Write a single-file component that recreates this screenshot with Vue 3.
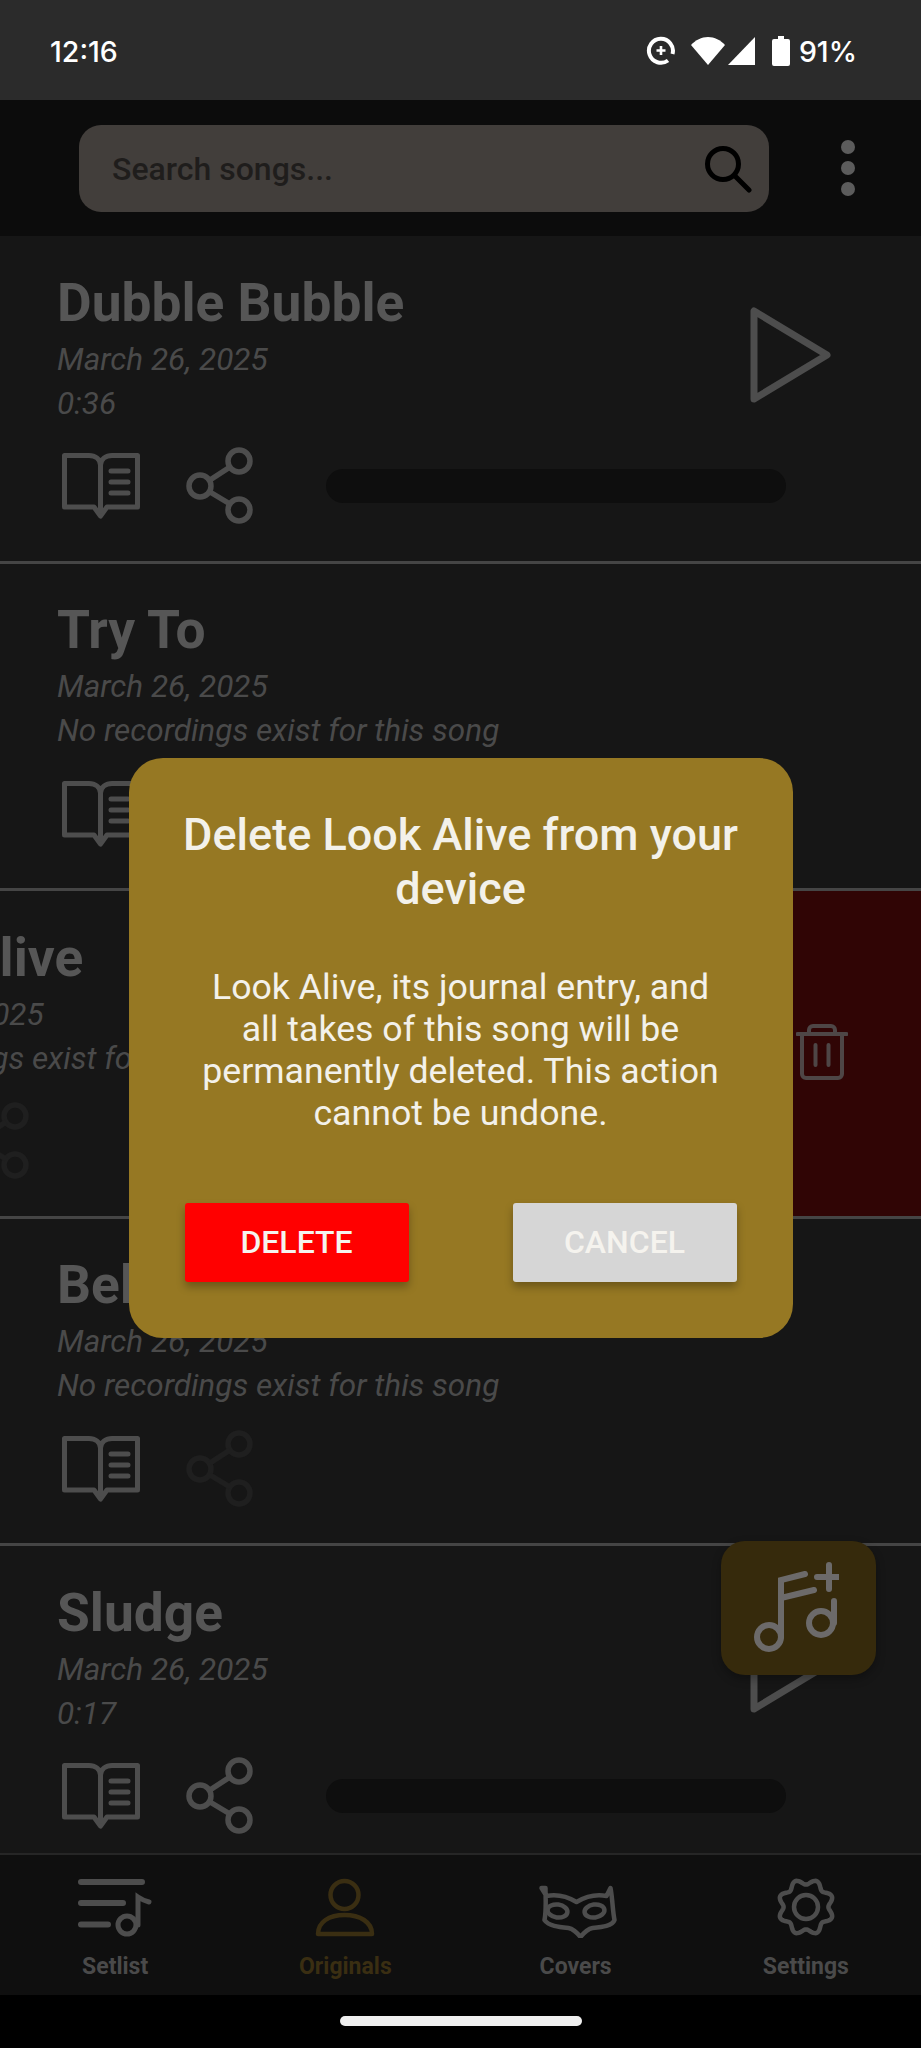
<script setup>
import { computed } from 'vue';

const songs = [
  { title: 'Dubble Bubble', date: 'March 26, 2025', sub: '0:36', recorded: true },
  { title: 'Try To', date: 'March 26, 2025', sub: 'No recordings exist for this song', recorded: false },
  { title: 'Look Alive', date: 'March 26, 2025', sub: 'No recordings exist for this song', recorded: false, swiped: true },
  { title: 'Bel Air', date: 'March 26, 2025', sub: 'No recordings exist for this song', recorded: false },
  { title: 'Sludge', date: 'March 26, 2025', sub: '0:17', recorded: true },
];

const tabs = [
  { key: 'setlist', label: 'Setlist' },
  { key: 'originals', label: 'Originals', active: true },
  { key: 'covers', label: 'Covers' },
  { key: 'settings', label: 'Settings' },
];

// wavy gear outline for the settings tab, valley at the top
const gearPath = computed(() => {
  const pts = [];
  for (let i = 0; i < 160; i++) {
    const t = (i / 160) * Math.PI * 2;
    const r = 25.2 - 2.8 * Math.cos(8 * t);
    pts.push(`${(32 + r * Math.sin(t)).toFixed(2)} ${(33 - r * Math.cos(t)).toFixed(2)}`);
  }
  return 'M' + pts.join('L') + 'Z';
});
</script>

<template>
  <div class="phone">
    <div class="status-bar">
      <span class="clock">12:16</span>
      <div class="status-icons">
        <svg class="st-sync" width="30" height="30" viewBox="0 0 30 30" fill="none" stroke="#fff">
          <path d="M22 24.500A12 12 0 1 1 26.500 18" stroke-width="4" />
          <path d="M15 10v9M10.500 14.500h9" stroke-width="2.600" />
        </svg>
        <svg class="st-wifi" width="34" height="28" viewBox="0 0 34 28" fill="#fff">
          <path d="M17 28L0 8C4.500 3 10.500 0 17 0s12.500 3 17 8z" />
        </svg>
        <svg class="st-signal" width="28" height="28" viewBox="0 0 28 28" fill="#fff">
          <path d="M0 28L27 0v28z" />
        </svg>
        <svg class="st-batt" width="18" height="30" viewBox="0 0 18 30" fill="#fff">
          <path d="M6 0h6v3h4a2 2 0 0 1 2 2v23a2 2 0 0 1-2 2H2a2 2 0 0 1-2-2V5a2 2 0 0 1 2-2h4z" />
        </svg>
        <span class="pct">91%</span>
      </div>
    </div>

    <header class="top-bar">
      <div class="search">
        <span class="search-hint">Search songs...</span>
        <svg width="48" height="48" viewBox="0 0 48 48" fill="none" stroke="#000" stroke-width="5" stroke-linecap="round">
          <circle cx="19" cy="19" r="15.500" />
          <path d="M31 31l14 14" />
        </svg>
      </div>
      <div class="more">
        <i></i><i></i><i></i>
      </div>
    </header>

    <main class="song-list">
      <div v-for="song in songs" :key="song.title" class="song-row">
        <div v-if="song.swiped" class="delete-panel">
          <svg width="52" height="58" viewBox="0 0 52 58" fill="none" stroke="#4e4646" stroke-width="4" stroke-linejoin="round" stroke-linecap="round">
            <path d="M1.500 10h49M13 10V6a4 4 0 0 1 4-4h18a4 4 0 0 1 4 4v4M6 10v40a4 4 0 0 0 4 4h32a4 4 0 0 0 4-4V10M19.500 21v20M32.500 21v20" />
          </svg>
        </div>
        <div class="song-body" :class="{ swiped: song.swiped }">
          <div class="song-top">
            <div class="song-info">
              <div class="song-title">{{ song.title }}</div>
              <div class="song-meta">{{ song.date }}</div>
              <div class="song-meta">{{ song.sub }}</div>
            </div>
            <svg v-if="song.recorded" class="play" width="84" height="100" viewBox="0 0 84 100" fill="none" stroke="#4d4d4d" stroke-width="7" stroke-linejoin="round">
              <path d="M6 6v88l73-44z" />
            </svg>
          </div>
          <div class="song-actions">
            <svg width="80" height="70" viewBox="0 0 80 70" fill="none" stroke="#4d4d4d" stroke-width="5" stroke-linejoin="round" stroke-linecap="round">
              <path d="M3.500 4.500H28c6 0 11 3.500 11.500 9.500C40 8 45 4.500 51 4.500h25.500V56H46l-6.500 9-6.500-9H3.500z" />
              <path d="M39.500 14v46M50 20h17M50 31h17M50 42h17" />
            </svg>
            <svg class="share" :class="{ off: !song.recorded }" width="70" height="80" viewBox="0 0 70 80" fill="none" stroke-width="5.500">
              <circle cx="54" cy="15" r="11" />
              <circle cx="15" cy="40" r="11" />
              <circle cx="54" cy="64" r="11" />
              <path d="M25 34l20-13M25 46l20 12" />
            </svg>
            <div v-if="song.recorded" class="progress"></div>
          </div>
        </div>
      </div>
    </main>

    <nav class="tabs">
      <div v-for="tab in tabs" :key="tab.key" class="tab" :class="{ active: tab.active }">
        <svg v-if="tab.key === 'setlist'" width="80" height="64" viewBox="0 0 80 64" fill="none" stroke="#4d4d4d" stroke-width="5" stroke-linecap="round">
          <path d="M6 8h61M6 29h42M6 50.500h27" stroke-width="6" />
          <circle cx="52" cy="51" r="9" />
          <path d="M63 51V23c3 2 7 4 11 5" />
        </svg>
        <svg v-else-if="tab.key === 'originals'" width="64" height="64" viewBox="0 0 64 64" fill="none" stroke="#3a2e12" stroke-width="4.500" stroke-linejoin="round">
          <circle cx="31.500" cy="21" r="14" />
          <path d="M5 60c0-12 11-19 26.500-19S59 48 59 60z" />
        </svg>
        <svg v-else-if="tab.key === 'covers'" width="86" height="64" viewBox="0 0 86 64" fill="none" stroke="#4d4d4d" stroke-width="4.500" stroke-linejoin="round">
          <path d="M8.500 14l5 8c10-2 20 0 30 6 10-6 20-8 30-6l4-8c2 10 2 22 4 32-2 6-12 7-22 8-5 1-8 4-12 9-4-5-7-8-12-9-10-1-20-2-24-8 2-10 1-22 1-32z" />
          <ellipse cx="24.500" cy="37" rx="10" ry="6.500" transform="rotate(8 24.500 37)" />
          <ellipse cx="61.500" cy="37" rx="10" ry="6.500" transform="rotate(-8 61.500 37)" />
        </svg>
        <svg v-else width="64" height="64" viewBox="0 0 64 64" fill="none" stroke="#4d4d4d" stroke-width="4.500">
          <path :d="gearPath" />
          <circle cx="32" cy="33" r="12" />
        </svg>
        <span class="tab-label">{{ tab.label }}</span>
      </div>
    </nav>

    <div class="gesture-bar">
      <span class="gesture-pill"></span>
    </div>

    <button class="fab">
      <svg width="100" height="100" viewBox="0 0 100 100" fill="none" stroke="#6c6a6a" stroke-width="6" stroke-linecap="round">
        <circle cx="30" cy="75" r="12" />
        <path d="M42 75V18l24-6M42 36l33-8" />
        <circle cx="82" cy="61" r="12" />
        <path d="M95 61V39M90 3v24M78 15h24" />
      </svg>
    </button>

    <div class="dialog-layer">
      <div class="dialog">
        <h2 class="dialog-title">Delete Look Alive from your device</h2>
        <p class="dialog-text">Look Alive, its journal entry, and all takes of this song will be permanently deleted. This action cannot be undone.</p>
        <div class="dialog-buttons">
          <button class="btn btn-delete">DELETE</button>
          <button class="btn btn-cancel">CANCEL</button>
        </div>
      </div>
    </div>
  </div>
</template>

<style>
html,
body {
  background: #000;
}
</style>

<style scoped>
.phone {
  position: relative;
  width: 921px;
  height: 2048px;
  display: flex;
  flex-direction: column;
  overflow: hidden;
  font-family: Roboto, "Liberation Sans", sans-serif;
  background: #161616;
}

.status-bar {
  height: 100px;
  flex: none;
  display: flex;
  align-items: center;
  justify-content: space-between;
  padding: 2px 64px 0 50px;
  box-sizing: border-box;
  background: #2b2b2b;
  color: #fff;
  font-family: Inter, Roboto, sans-serif;
  font-weight: 500;
  font-size: 28.500px;
}
.status-icons {
  display: flex;
  align-items: center;
}
.st-sync { margin-right: 15px; }
.st-wifi { margin-right: 3px; }
.st-signal { margin-right: 16px; }
.st-batt { margin-right: 9px; }

.top-bar {
  height: 136px;
  flex: none;
  display: flex;
  align-items: center;
  padding: 0 66px 0 79px;
  justify-content: space-between;
  background: #0c0c0c;
}
.search {
  width: 690px;
  height: 87px;
  margin-top: 1px;
  display: flex;
  align-items: center;
  justify-content: space-between;
  padding: 0 17px 0 33px;
  box-sizing: border-box;
  border-radius: 22px;
  background: #423e3b;
}
.search-hint {
  font-size: 32px;
  font-weight: 500;
  color: #1f1d1c;
}
.more {
  display: flex;
  flex-direction: column;
  gap: 7px;
}
.more i {
  display: block;
  width: 14px;
  height: 14px;
  border-radius: 50%;
  background: #5c5c5c;
}

.song-list {
  flex: 1;
  overflow: hidden;
}
.song-row {
  position: relative;
  height: 327.500px;
  box-sizing: border-box;
  border-bottom: 3px solid #454545;
  overflow: hidden;
}
.delete-panel {
  position: absolute;
  top: 0;
  right: 0;
  bottom: 0;
  width: 224px;
  display: flex;
  align-items: center;
  justify-content: flex-end;
  padding-right: 73px;
  box-sizing: border-box;
  background: #300505;
}
.song-body {
  height: 100%;
  background: #161616;
}
.song-body.swiped {
  transform: translateX(-224px);
}
.song-top {
  display: flex;
  justify-content: space-between;
  align-items: center;
  padding: 37px 89px 0 57px;
  height: 154px;
}
.play {
  margin-top: 9px;
}
.song-title {
  font-size: 53.300px;
  line-height: 56px;
  font-weight: 700;
  color: #565656;
  margin-bottom: 7px;
  white-space: nowrap;
}
.song-meta {
  font-size: 31.500px;
  line-height: 44px;
  font-style: italic;
  color: #4a4a4a;
  white-space: nowrap;
}
.song-actions {
  display: flex;
  align-items: center;
  margin-top: 19px;
  padding-left: 61px;
}
.share {
  margin-left: 44px;
  stroke: #4d4d4d;
}
.share.off {
  stroke: #1f1f1f;
}
.progress {
  width: 460px;
  height: 34px;
  margin-left: 71px;
  border-radius: 17px;
  background: #0e0e0e;
}

.tabs {
  height: 142px;
  flex: none;
  display: grid;
  grid-template-columns: repeat(4, 1fr);
  box-sizing: border-box;
  padding: 19px 0 0;
  border-top: 2px solid #262626;
  background: #0f0f0f;
}
.tab {
  display: flex;
  flex-direction: column;
  align-items: center;
  color: #4a4a4a;
}
.tab svg {
  display: block;
}
.tab.active {
  color: #3a2e12;
}
.tab-label {
  margin-top: 15px;
  font-size: 23px;
  line-height: 28px;
  font-weight: 700;
}

.gesture-bar {
  height: 53px;
  flex: none;
  display: flex;
  justify-content: center;
  padding-top: 21px;
  box-sizing: border-box;
  background: #000;
}
.gesture-pill {
  width: 242px;
  height: 10px;
  border-radius: 5px;
  background: #efefef;
}

.fab {
  position: absolute;
  top: 1541px;
  left: 721px;
  width: 155px;
  height: 134px;
  padding: 0;
  border: none;
  border-radius: 24px;
  background: #362a0c;
  box-shadow: 0 4px 10px rgba(0, 0, 0, 0.3);
  display: flex;
  align-items: center;
  justify-content: center;
}
.fab svg {
  margin-left: -20px;
  margin-top: 8px;
}

.dialog-layer {
  position: absolute;
  top: 100px;
  left: 0;
  right: 0;
  bottom: 53px;
  display: flex;
  align-items: center;
  justify-content: center;
}
.dialog {
  width: 664px;
  height: 580px;
  box-sizing: border-box;
  padding: 50px 56px 0;
  border-radius: 34px;
  background: #967823;
  color: #f3f1ea;
  text-align: center;
}
.dialog-title {
  margin: 0 -8px;
  font-size: 45px;
  line-height: 54px;
  font-weight: 500;
}
.dialog-text {
  margin: 50px 0 0;
  padding: 0 12px;
  font-size: 35.700px;
  line-height: 42px;
  font-weight: 400;
}
.dialog-buttons {
  display: flex;
  justify-content: space-between;
  margin-top: 69px;
}
.btn {
  width: 224px;
  height: 79px;
  border: none;
  border-radius: 3px;
  font-family: Roboto, sans-serif;
  font-size: 32px;
  font-weight: 500;
  color: #f5f3ee;
  box-shadow: 0 5px 9px rgba(0, 0, 0, 0.28);
}
.btn-delete {
  background: #ff0000;
}
.btn-cancel {
  background: #d6d6d6;
}
</style>
